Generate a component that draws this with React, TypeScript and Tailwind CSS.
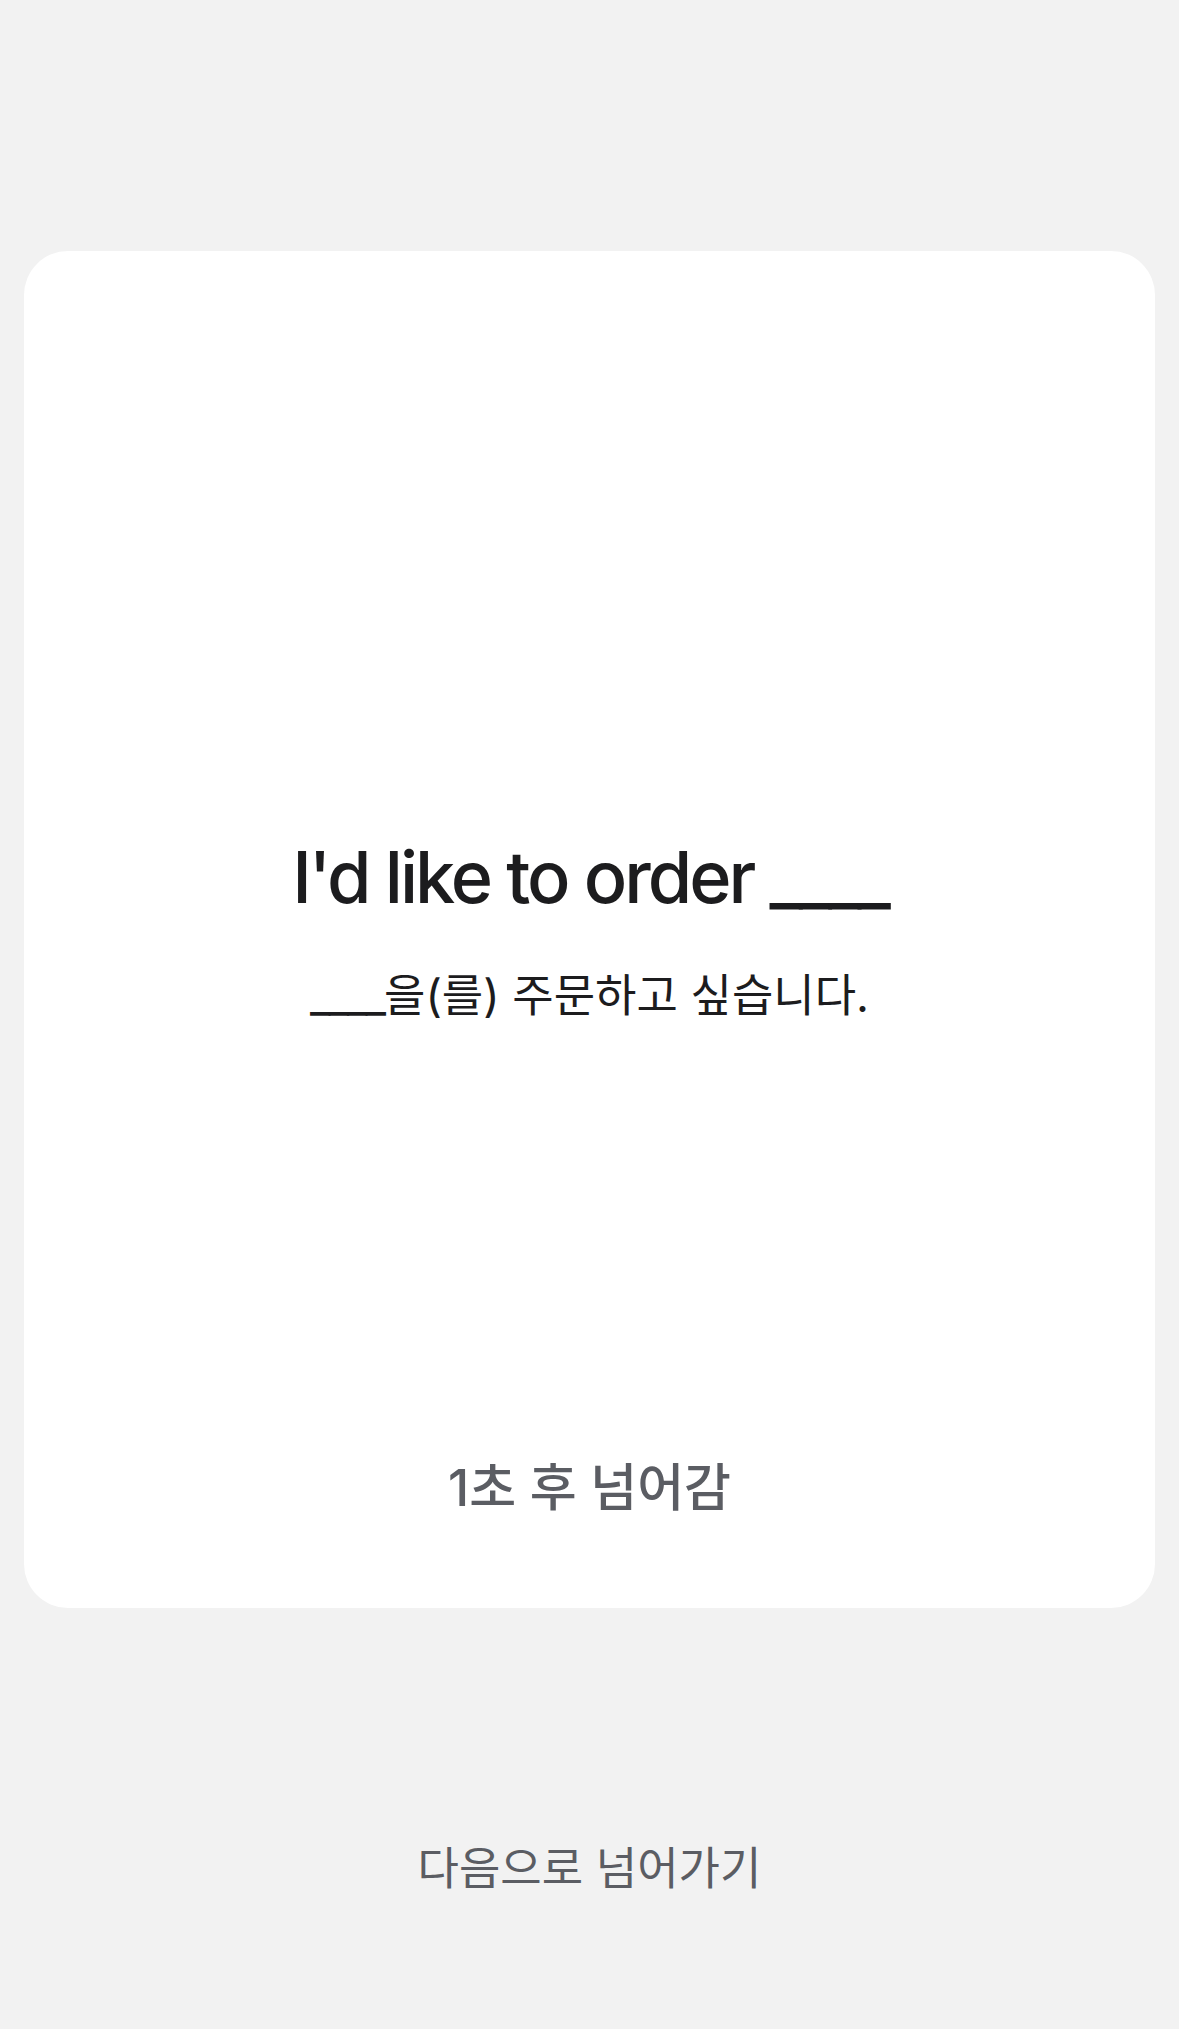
import React from "react";

export default function App() {
  return (
    <div className="min-h-[2029px] w-full bg-[#f2f2f2] flex flex-col items-center pt-[251px]" style={{ fontFamily: "Inter, 'Noto Sans CJK KR', sans-serif" }}>
      <div className="w-[1131px] h-[1357px] bg-white rounded-[44px] flex flex-col items-center pt-[583px] pb-[87px]">
        <div className="text-[72px] leading-[86px] font-medium text-[#1c1c1e] tracking-[-3px] whitespace-nowrap">
          I'd like to order <span className="tracking-[-4px]">____</span>
        </div>
        <div className="mt-[46px] text-[45px] leading-[60px] text-[#1c1c1e] whitespace-nowrap">
          <span className="tracking-[-2px]">____</span>을(를) 주문하고 싶습니다.
        </div>
        <div className="flex-1" />
        <div className="text-[51px] leading-[66px] font-medium text-[#5b5d63] whitespace-nowrap">
          1초 후 넘어감
        </div>
      </div>
      <div className="mt-[232px] text-[45px] leading-[58px] text-[#5b5d63] whitespace-nowrap">
        다음으로 넘어가기
      </div>
    </div>
  );
}
